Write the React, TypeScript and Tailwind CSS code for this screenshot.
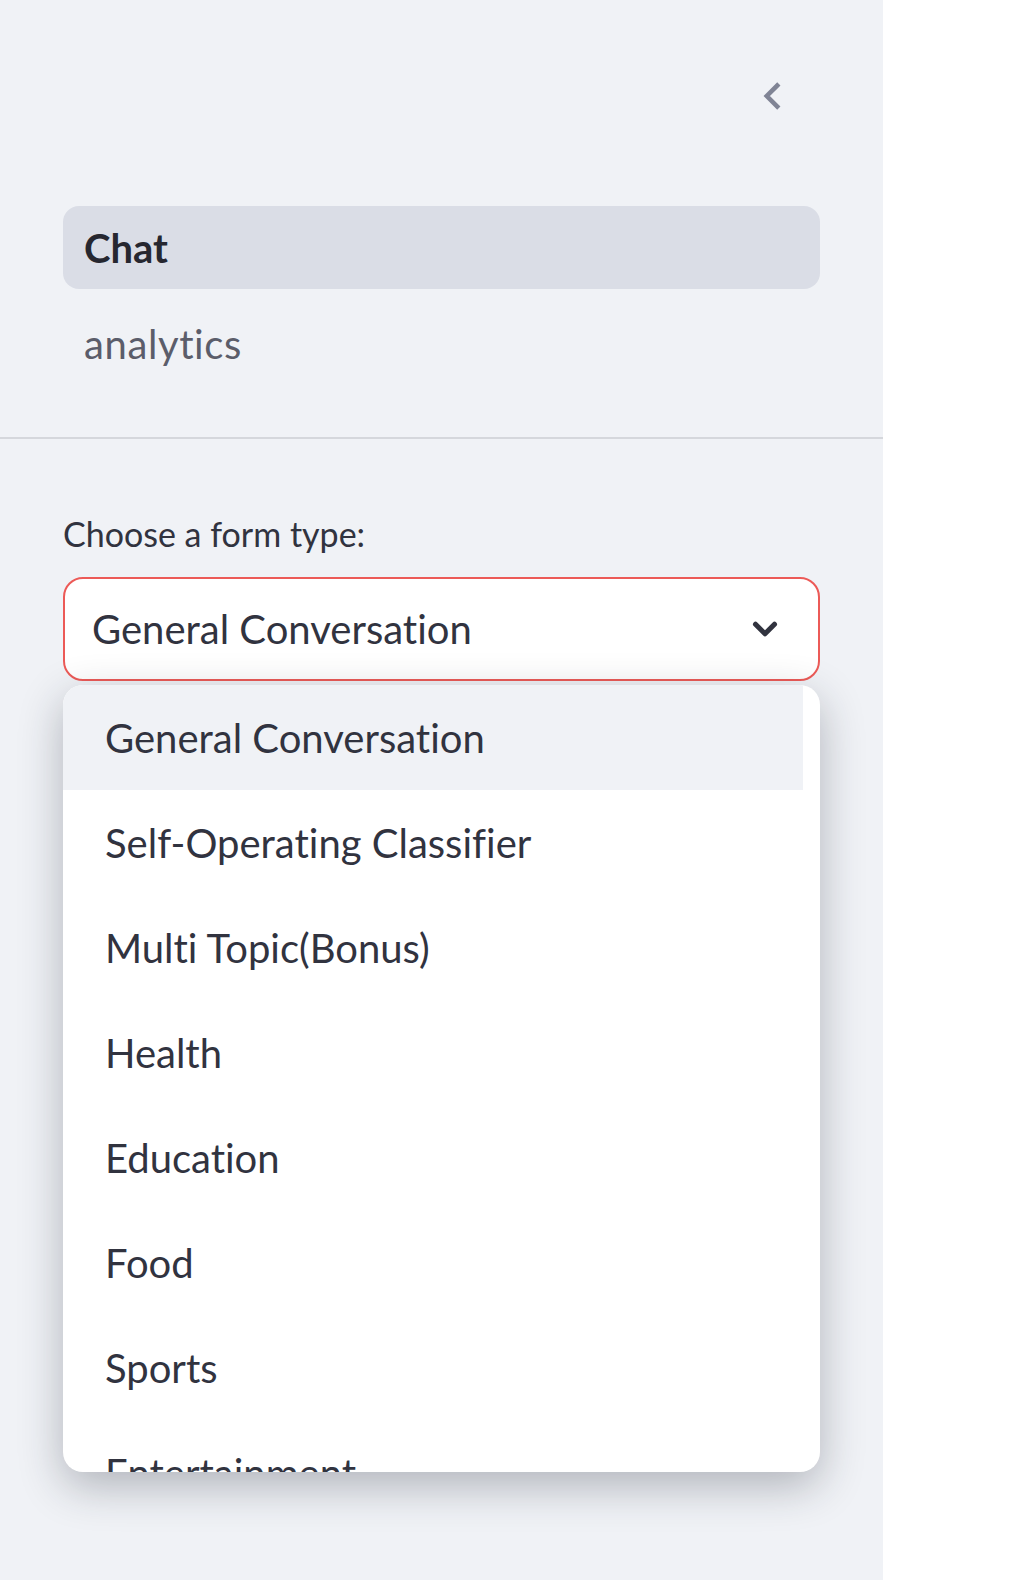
import { ChevronDown } from "lucide-react";

const OPTIONS = [
  "General Conversation",
  "Self-Operating Classifier",
  "Multi Topic(Bonus)",
  "Health",
  "Education",
  "Food",
  "Sports",
  "Entertainment",
];

const font = { fontFamily: "Lato, 'Noto Sans', sans-serif" };

export default function App() {
  return (
    <div
      className="flex w-[1020px] h-[1580px] bg-white text-[#31333f] [font-variant-ligatures:none]"
      style={font}
    >
      {/* Sidebar */}
      <aside className="w-[883px] h-full bg-[#f0f2f6] flex flex-col">
        {/* collapse button */}
        <div className="h-[206px] flex items-start justify-end pr-[86px] pt-[71px]">
          <svg width="50" height="50" viewBox="0 0 24 24" className="text-[#808495]">
            <path d="M14.5 7 L9.5 12 L14.5 17" fill="none" stroke="currentColor" strokeWidth="2.2" strokeLinecap="square" />
          </svg>
        </div>

        {/* Page nav */}
        <nav className="flex flex-col gap-[13px] pl-[63px] pr-[63px]">
          <div className="h-[83px] rounded-[16px] bg-[#dadde6] flex items-center px-[21px] text-[40px] font-bold text-[#262730]">
            Chat
          </div>
          <div className="h-[83px] flex items-center px-[21px] text-[40px] tracking-[0.6px] text-[#5b5d6a]">
            analytics
          </div>
        </nav>

        <div className="mt-[52px] h-[2px] bg-[#d5d7dc]" />

        {/* Select widget */}
        <div className="pl-[63px] pr-[63px] pt-[74px]">
          <div className="text-[34px] leading-[42px] text-[#31333f]">Choose a form type:</div>
          <div className="relative mt-[22px]">
            <div className="h-[104px] rounded-[20px] border-[2.5px] border-[#ec5a57] bg-white flex items-center justify-between pl-[27px] pr-[34px] text-[40px]">
              <span>General Conversation</span>
              <ChevronDown size={38} strokeWidth={3.2} className="text-[#31333f]" />
            </div>

            {/* Open dropdown menu */}
            <div className="absolute left-0 right-0 top-[108px] h-[787px] rounded-[20px] bg-white overflow-hidden shadow-[0_14px_44px_rgba(30,35,50,0.3)]">
              <ul className="pr-[17px]">
                {OPTIONS.map((o, i) => (
                  <li
                    key={o}
                    className={`h-[105px] flex items-center pl-[42px] text-[40px] text-[#31333f] ${
                      i === 0 ? "bg-[#f0f2f6]" : ""
                    }`}
                  >
                    {o}
                  </li>
                ))}
              </ul>
            </div>
          </div>
        </div>
      </aside>
      <main className="flex-1 bg-white" />
    </div>
  );
}
